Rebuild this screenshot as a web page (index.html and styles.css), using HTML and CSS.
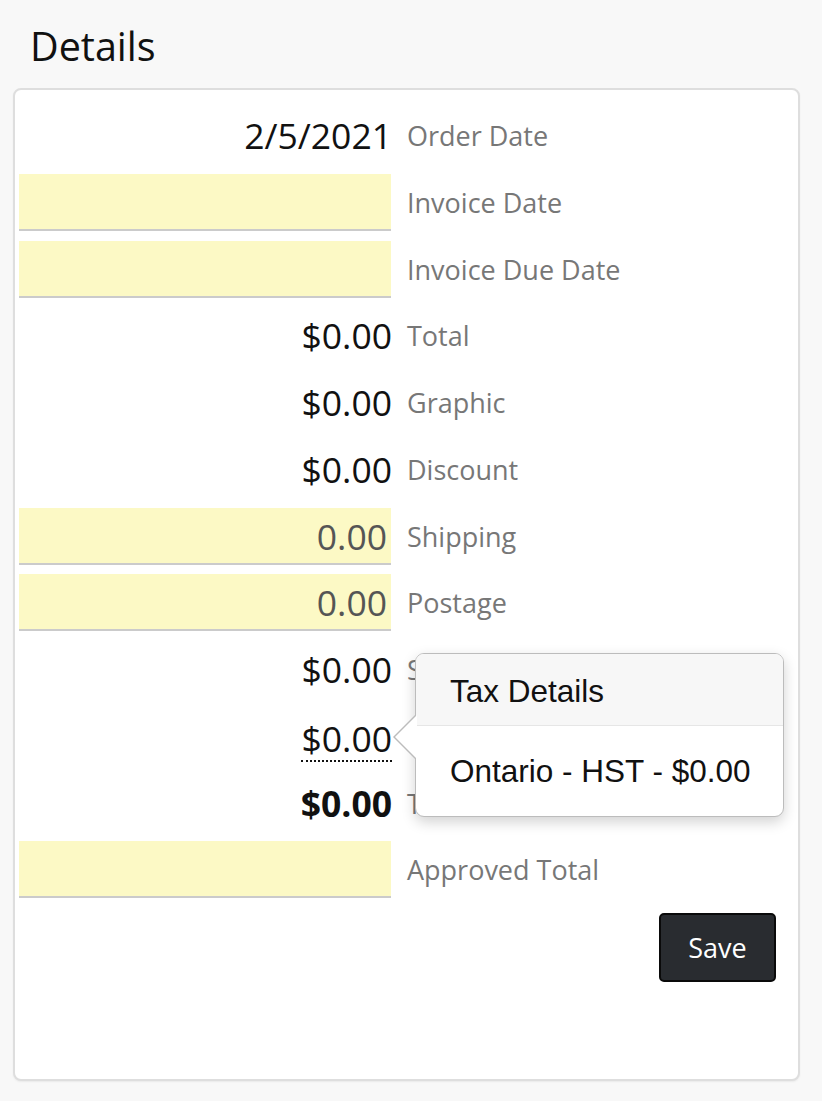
FILE: index.html
```html
<!DOCTYPE html>
<html lang="en">
<head>
<meta charset="utf-8">
<title>Details</title>
<link rel="stylesheet" href="styles.css">
</head>
<body>
<div class="page">
  <h2 class="title">Details</h2>
  <div class="card">
    <div class="form">
      <div class="value">2/5/2021</div><div class="label">Order Date</div>
      <div class="input"></div><div class="label">Invoice Date</div>
      <div class="input"></div><div class="label">Invoice Due Date</div>
      <div class="value">$0.00</div><div class="label">Total</div>
      <div class="value">$0.00</div><div class="label">Graphic</div>
      <div class="value">$0.00</div><div class="label">Discount</div>
      <div class="input">0.00</div><div class="label">Shipping</div>
      <div class="input">0.00</div><div class="label">Postage</div>
      <div class="value">$0.00</div><div class="label">Subtotal</div>
      <div class="value"><span class="dotted">$0.00</span></div>
      <div class="label tax-label">Tax
        <div class="popover">
          <div class="arrow"></div>
          <div class="pop-head">Tax Details</div>
          <div class="pop-body">Ontario - HST - $0.00</div>
        </div>
      </div>
      <div class="value bold">$0.00</div><div class="label">Total Due</div>
      <div class="input"></div><div class="label">Approved Total</div>
    </div>
    <div class="actions">
      <button class="btn">Save</button>
    </div>
  </div>
</div>
</body>
</html>
```
FILE: styles.css
```css
html, body {
  margin: 0;
  padding: 0;
  background: #f8f8f8;
}
body {
  font-family: "Open Sans", "Noto Sans", sans-serif;
  width: 822px;
  height: 1101px;
  overflow: hidden;
}
.page {
  padding: 0 22px 0 13px;
}
.title {
  margin: 0;
  padding: 19px 0 0 17px;
  height: 88px;
  box-sizing: border-box;
  font-size: 39.5px;
  font-weight: 400;
  line-height: 54px;
  color: #111;
}
.card {
  background: #fff;
  border: 2px solid #dedede;
  border-radius: 8px;
  height: 993px;
  box-sizing: border-box;
  padding: 17px 0 0 4px;
  box-shadow: 0 1px 2px rgba(0,0,0,0.06);
}
.form {
  display: grid;
  grid-template-columns: 372px 1fr;
  column-gap: 16px;
  row-gap: 9.75px;
}
.value, .input, .label {
  height: 57px;
  line-height: 57px;
}
.value {
  text-align: right;
  font-size: 35.5px;
  color: #111;
  padding-right: 0;
  margin-right: -1px;
}
.value.bold {
  font-weight: 700;
}
.dotted {
  display: inline-block;
  line-height: 44px;
  border-bottom: 2px dotted #111;
  margin-top: 8px;
}
.input {
  background: #fcf9c5;
  border-bottom: 2px solid #cbcbcb;
  box-sizing: border-box;
  text-align: right;
  padding-right: 4px;
  font-size: 35.5px;
  color: #555;
  line-height: 56px;
}
.label {
  font-size: 27px;
  color: #777;
}
.tax-label {
  position: relative;
}
.popover {
  position: absolute;
  left: 8px;
  top: -55px;
  width: 367px;
  background: #fff;
  border: 1px solid #bcbcbc;
  border-radius: 9px;
  box-shadow: 0 5px 14px rgba(0,0,0,0.18);
  font-family: "Liberation Sans", Arial, sans-serif;
  color: #111;
  font-size: 31.5px;
  line-height: 1;
  z-index: 5;
}
.arrow {
  position: absolute;
  left: -23px;
  top: 60px;
  width: 0;
  height: 0;
  border-top: 23px solid transparent;
  border-bottom: 23px solid transparent;
  border-right: 23px solid #bcbcbc;
}
.arrow::after {
  content: "";
  position: absolute;
  left: 2px;
  top: -22px;
  border-top: 22px solid transparent;
  border-bottom: 22px solid transparent;
  border-right: 22px solid #fff;
}
.pop-head {
  background: #f7f7f7;
  border-bottom: 1px solid #e6e6e6;
  border-radius: 8px 8px 0 0;
  height: 72px;
  box-sizing: border-box;
  padding: 22px 0 0 34px;
}
.pop-body {
  height: 90px;
  box-sizing: border-box;
  padding: 30px 0 0 34px;
}
.actions {
  display: flex;
  justify-content: flex-end;
  padding: 15px 22px 0 0;
}
.btn {
  width: 117px;
  height: 69px;
  background: #292c30;
  border: 2px solid #0a0a0a;
  border-radius: 5px;
  color: #fff;
  font-family: "Open Sans", "Noto Sans", sans-serif;
  font-size: 27px;
  padding: 0;
}
```
